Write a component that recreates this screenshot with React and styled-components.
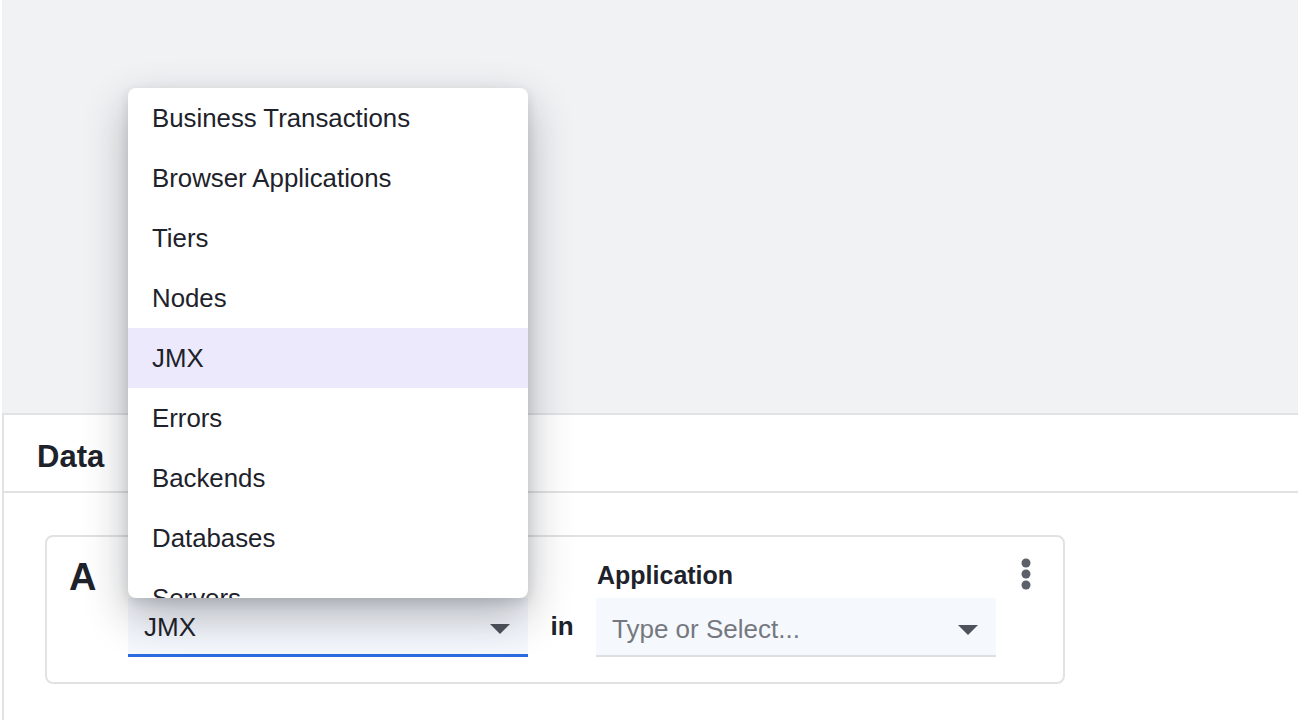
import React from 'react';
import styled, { createGlobalStyle } from 'styled-components';

const GlobalStyle = createGlobalStyle`
  html, body {
    margin: 0;
    padding: 0;
    background: #ffffff;
  }
  body {
    font-family: "Liberation Sans", Arial, sans-serif;
    color: #1d222b;
  }
`;

const Shell = styled.div`
  margin-left: 2px;
  min-height: 720px;
`;

const Canvas = styled.div`
  height: 413px;
  background: #f1f2f4;
`;

const Panel = styled.section`
  background: #ffffff;
  border-top: 2px solid #e1e2e4;
  border-left: 2px solid #e1e2e4;
  min-height: 305px;
`;

const PanelHeader = styled.header`
  box-sizing: border-box;
  height: 78px;
  display: flex;
  align-items: center;
  padding: 7px 0 0 33px;
  border-bottom: 2px solid #e1e2e4;
  h2 {
    margin: 0;
    font-size: 31px;
    font-weight: 700;
    color: #1d222b;
  }
`;

const PanelBody = styled.div`
  padding: 42px 0 0 41px;
`;

const QueryCard = styled.div`
  box-sizing: border-box;
  width: 1020px;
  height: 149px;
  border: 2px solid #e2e2e2;
  border-radius: 8px;
  padding: 23px 20px 0 22px;
  display: flex;
  align-items: flex-start;
`;

const QueryLetter = styled.div`
  width: 59px;
  font-size: 38px;
  line-height: 38px;
  font-weight: 700;
  margin-top: -2px;
`;

const Field = styled.div`
  display: flex;
  flex-direction: column;
  width: 400px;
`;

const Label = styled.label`
  font-size: 25px;
  font-weight: 700;
  line-height: 30px;
  height: 30px;
  margin-bottom: 8px;
  padding-left: 1px;
`;

const SelectBox = styled.div`
  position: relative;
  box-sizing: border-box;
  height: 59px;
  display: flex;
  align-items: center;
  justify-content: space-between;
  padding: ${(p) => (p.$active ? '3px' : '6px')} 18px 0 16px;
  background: #f5f8fd;
  border-bottom: ${(p) => (p.$active ? '3px solid #2a6be0' : '2px solid #dcdee1')};
  font-size: 26px;
  color: ${(p) => (p.$placeholder ? '#767880' : '#1d222b')};
`;

const Caret = styled.span`
  width: 0;
  height: 0;
  border-left: 10px solid transparent;
  border-right: 10px solid transparent;
  border-top: 10px solid #4f535b;
  margin-top: ${(p) => (p.$low ? '0' : '2px')};
`;

const Joiner = styled.div`
  width: 68px;
  margin-top: 38px;
  height: 56px;
  display: flex;
  align-items: center;
  justify-content: center;
  font-size: 26px;
  font-weight: 700;
`;

const Kebab = styled.button`
  border: 0;
  background: none;
  padding: 0;
  margin: -2px 0 0 23px;
  width: 14px;
  display: flex;
  justify-content: center;
  cursor: pointer;
`;

const Menu = styled.ul`
  position: absolute;
  left: 0;
  bottom: 100%;
  width: 400px;
  height: 510px;
  margin: 0;
  padding: 0;
  list-style: none;
  background: #ffffff;
  border-radius: 8px;
  overflow: hidden;
  box-shadow: 0 18px 44px rgba(20, 24, 32, 0.3), 0 4px 12px rgba(20, 24, 32, 0.12);
  z-index: 10;
`;

const MenuItem = styled.li`
  height: 60px;
  flex-shrink: 0;
  display: flex;
  align-items: center;
  padding-left: 24px;
  font-size: 25.8px;
  color: #1d222b;
  background: ${(p) => (p.$selected ? '#ebe9fb' : 'transparent')};
`;

const options = [
  'Business Transactions',
  'Browser Applications',
  'Tiers',
  'Nodes',
  'JMX',
  'Errors',
  'Backends',
  'Databases',
  'Servers',
];

export default function App() {
  const selected = 'JMX';
  return (
    <>
      <GlobalStyle />
      <Shell>
        <Canvas />
        <Panel>
          <PanelHeader>
            <h2>Data</h2>
          </PanelHeader>
          <PanelBody>
            <QueryCard>
              <QueryLetter>A</QueryLetter>
              <Field>
                <Label aria-label="Metric type" />
                <SelectBox $active>
                  <span>{selected}</span>
                  <Caret />
                  <Menu>
                    {options.map((option) => (
                      <MenuItem key={option} $selected={option === selected}>
                        {option}
                      </MenuItem>
                    ))}
                  </Menu>
                </SelectBox>
              </Field>
              <Joiner>in</Joiner>
              <Field>
                <Label>Application</Label>
                <SelectBox $placeholder>
                  <span>Type or Select...</span>
                  <Caret $low />
                </SelectBox>
              </Field>
              <Kebab aria-label="More options">
                <svg width="10" height="32" viewBox="0 0 10 32">
                  <circle cx="5" cy="5" r="4.5" fill="#5c6069" />
                  <circle cx="5" cy="16" r="4.5" fill="#5c6069" />
                  <circle cx="5" cy="27" r="4.5" fill="#5c6069" />
                </svg>
              </Kebab>
            </QueryCard>
          </PanelBody>
        </Panel>
      </Shell>
    </>
  );
}
